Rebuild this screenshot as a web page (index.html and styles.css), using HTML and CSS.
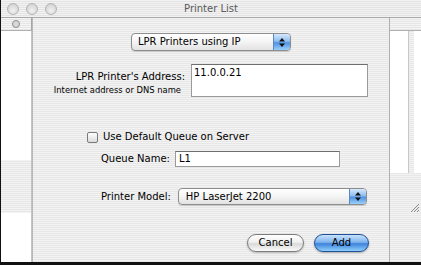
FILE: index.html
```html
<!DOCTYPE html>
<html lang="en">
<head>
    <meta charset="UTF-8">
    <title>Printer List</title>
    <link rel="stylesheet" href="styles.css">
</head>
<body>
    <div class="screen">
        <div class="titlebar">
            <div class="lights">
                <span class="light"></span>
                <span class="light"></span>
                <span class="light"></span>
            </div>
            <div class="title">Printer List</div>
            <div></div>
        </div>

        <div class="main">
            <div class="side side-left">
                <div class="side-head"><span class="head-dot"></span></div>
                <div class="list-white list-top"></div>
                <div class="list-band"></div>
                <div class="list-white grow"></div>
            </div>

            <div class="sheet">
                <div class="row-type">
                    <div class="popup popup-type">
                        <span class="popup-text">LPR Printers using IP</span>
                        <span class="stepper">
                            <svg width="6" height="9" viewBox="0 0 6 9"><path d="M3 0 L6 3.5 H0 Z M0 5.5 H6 L3 9 Z" fill="#111"/></svg>
                        </span>
                    </div>
                </div>

                <div class="row-address">
                    <div class="address-labels">
                        <div class="label-main">LPR Printer's Address:</div>
                        <div class="label-hint">Internet address or DNS name</div>
                    </div>
                    <div class="textbox textbox-address">11.0.0.21</div>
                </div>

                <div class="row-check">
                    <span class="checkbox"></span>
                    <span class="check-label">Use Default Queue on Server</span>
                </div>

                <div class="row-queue">
                    <span class="field-label">Queue Name:</span>
                    <div class="textbox textbox-queue">L1</div>
                </div>

                <div class="row-model">
                    <span class="field-label">Printer Model:</span>
                    <div class="popup popup-model">
                        <span class="popup-text">HP LaserJet 2200</span>
                        <span class="stepper">
                            <svg width="6" height="9" viewBox="0 0 6 9"><path d="M3 0 L6 3.5 H0 Z M0 5.5 H6 L3 9 Z" fill="#111"/></svg>
                        </span>
                    </div>
                </div>

                <div class="row-buttons">
                    <div class="btn btn-cancel">Cancel</div>
                    <div class="btn btn-add">Add</div>
                </div>
            </div>

            <div class="side side-right">
                <div class="side-head"></div>
                <div class="right-list">
                    <div class="right-white"></div>
                    <div class="right-bar"></div>
                    <div class="right-white narrow"></div>
                </div>
                <div class="right-bottom">
                    <svg class="grip" width="10" height="10" viewBox="0 0 10 10">
                        <path d="M9 1 L1 9 M9 4 L4 9 M9 7 L7 9" stroke="#8a8a8a" stroke-width="1"/>
                    </svg>
                </div>
            </div>
        </div>
    </div>
</body>
</html>
```

FILE: styles.css
```css
body {
    margin: 0;
    background-color: #111;
    font-family: "DejaVu Sans", "Liberation Sans", sans-serif;
    font-size: 10px;
    color: #000;
}

.screen {
    width: 420px;
    height: 262px;
    border-left: 1px solid #111;
    border-bottom: 3px solid #111;
    display: flex;
    flex-direction: column;
    background: repeating-linear-gradient(to bottom, #f3f3f3 0 1px, #e7e7e7 1px 2px);
    overflow: hidden;
}

.titlebar {
    height: 17px;
    border-bottom: 1px solid #a8a8a8;
    display: grid;
    grid-template-columns: 1fr auto 1fr;
    align-items: center;
    background: repeating-linear-gradient(to bottom, #f2f2f2 0 1px, #e4e4e4 1px 2px);
}

.lights {
    display: flex;
    gap: 7px;
    padding-left: 6px;
}

.light {
    width: 10px;
    height: 10px;
    border-radius: 50%;
    border: 1px solid #b4b4b4;
    background: radial-gradient(circle at 50% 65%, #f2f2f2 0, #d6d6d6 70%);
}

.title {
    color: #5a5a5a;
    font-size: 10px;
    line-height: 12px;
}

.main {
    flex: 1;
    display: flex;
}

.side {
    width: 31px;
    display: flex;
    flex-direction: column;
}

.side-head {
    height: 12px;
    border-bottom: 1px solid #b0b0b0;
    display: flex;
    align-items: center;
    justify-content: center;
    background: repeating-linear-gradient(to bottom, #f4f4f4 0 1px, #e6e6e6 1px 2px);
}

.side-left .side-head {
    border-right: 1px solid #a6a6a6;
}

.head-dot {
    width: 6px;
    height: 6px;
    border-radius: 50%;
    border: 1px solid #8c8c8c;
    background: #d8d8d8;
}

.list-white {
    background: #fff;
    border-right: 1px solid #c4c4c4;
}

.list-top {
    height: 129px;
}

.list-band {
    height: 53px;
    border-right: 1px solid #c4c4c4;
}

.grow {
    flex: 1;
}

.sheet {
    width: 356px;
    border-left: 1px solid #b8b8b8;
    border-right: 1px solid #b0b0b0;
    padding-top: 15px;
    display: flex;
    flex-direction: column;
}

.row-type {
    padding-left: 98px;
}

.popup {
    box-sizing: border-box;
    display: flex;
    align-items: center;
    border: 1px solid #8e8e8e;
    border-radius: 4px;
    background: linear-gradient(to bottom, #ffffff 0%, #f4f4f4 50%, #e2e2e2 100%);
    box-shadow: 0 1px 1px rgba(0, 0, 0, 0.15);
    overflow: hidden;
}

.popup-type {
    width: 160px;
    height: 18px;
}

.popup-text {
    flex: 1;
    padding-left: 6px;
    line-height: 12px;
    white-space: nowrap;
}

.stepper {
    width: 16px;
    align-self: stretch;
    display: flex;
    align-items: center;
    justify-content: center;
    border-left: 1px solid #5b86c0;
    background: linear-gradient(to bottom, #d6e9fc 0%, #8fbdf0 45%, #4f92e2 55%, #9bd0fb 100%);
}

.row-address {
    margin-top: 13px;
    display: flex;
}

.address-labels {
    width: 152px;
    text-align: right;
    padding-top: 7px;
}

.label-main {
    line-height: 12px;
}

.label-hint {
    margin-top: 2px;
    font-size: 8.4px;
    line-height: 10px;
    padding-right: 4px;
}

.textbox {
    box-sizing: border-box;
    background: #fff;
    border: 1px solid #9a9a9a;
    border-top-color: #6e6e6e;
    line-height: 12px;
}

.textbox-address {
    margin-left: 6px;
    width: 177px;
    height: 33px;
    padding: 2px 2px;
}

.row-check {
    margin-top: 34px;
    padding-left: 54px;
    display: flex;
    align-items: center;
    height: 12px;
}

.checkbox {
    box-sizing: border-box;
    width: 11px;
    height: 11px;
    border: 1px solid #7a7a7a;
    border-radius: 2px;
    background: linear-gradient(to bottom, #ffffff, #dadada);
}

.check-label {
    margin-left: 5px;
    line-height: 12px;
}

.row-queue {
    margin-top: 8px;
    padding-left: 68px;
    display: flex;
    align-items: center;
}

.field-label {
    line-height: 12px;
    white-space: nowrap;
}

.textbox-queue {
    margin-left: 5px;
    width: 165px;
    height: 16px;
    padding: 1px 3px;
}

.row-model {
    margin-top: 21px;
    padding-left: 68px;
    display: flex;
    align-items: center;
}

.popup-model {
    margin-left: 7px;
    width: 189px;
    height: 17px;
}

.popup-model .popup-text {
    padding-left: 7px;
}

.row-buttons {
    margin-top: 29px;
    display: flex;
    justify-content: flex-end;
    gap: 10px;
    padding-right: 20px;
}

.btn {
    box-sizing: border-box;
    height: 18px;
    border-radius: 9px;
    display: flex;
    align-items: center;
    justify-content: center;
    line-height: 12px;
}

.btn-cancel {
    width: 57px;
    border: 1px solid #7c7c7c;
    background: linear-gradient(to bottom, #ffffff 0%, #f0f0f0 45%, #d9d9d9 55%, #fbfbfb 100%);
    box-shadow: 0 1px 2px rgba(0, 0, 0, 0.25);
}

.btn-add {
    width: 55px;
    border: 1px solid #1f4f95;
    background: linear-gradient(to bottom, #c8e2fc 0%, #7fb4ee 45%, #3d83dc 55%, #8fd0fb 100%);
    box-shadow: 0 1px 2px rgba(0, 0, 0, 0.3);
}

.side-right {
    flex: 1;
}

.right-list {
    height: 142px;
    display: flex;
}

.right-white {
    flex: 1;
    background: #fff;
}

.right-white.narrow {
    flex: 0 0 7px;
}

.right-bar {
    width: 5px;
    border-left: 1px solid #c8c8c8;
}

.right-bottom {
    flex: 1;
    display: flex;
    justify-content: flex-end;
    align-items: flex-start;
    padding-top: 30px;
}

.grip {
    margin-right: 1px;
}
```
